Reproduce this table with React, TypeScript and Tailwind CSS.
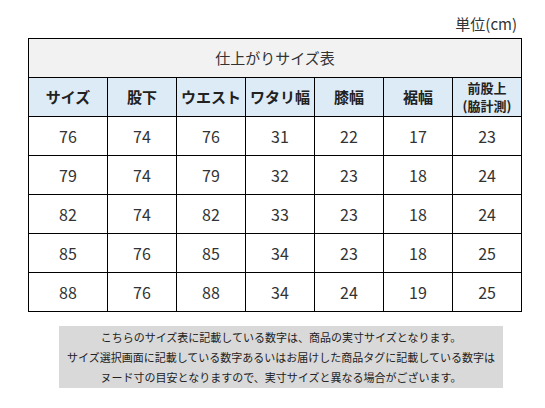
const headers = ['サイズ', '股下', 'ウエスト', 'ワタリ幅', '膝幅', '裾幅'];

const rows = [
  [76, 74, 76, 31, 22, 17, 23],
  [79, 74, 79, 32, 23, 18, 24],
  [82, 74, 82, 33, 23, 18, 24],
  [85, 76, 85, 34, 23, 18, 25],
  [88, 76, 88, 34, 24, 19, 25],
];

export default function App() {
  return (
    <div className="w-[545px] h-[408px] bg-white font-['Noto_Sans_CJK_JP','Noto_Sans',sans-serif] text-[#333]">
      <div className="flex justify-end pr-[28px] pt-[13px] text-[15px] leading-[22px]">単位(cm)</div>

      <table className="ml-[28px] mt-[3px] w-[493px] table-fixed border-collapse border border-black text-center">
        <colgroup>
          <col className="w-[79px]" />
          <col className="w-[69px]" />
          <col className="w-[69px]" />
          <col className="w-[69px]" />
          <col className="w-[69px]" />
          <col className="w-[69px]" />
          <col className="w-[69px]" />
        </colgroup>
        <thead>
          <tr className="h-[39px] bg-[#f2f2f2]">
            <th colSpan={7} className="border border-black text-[15px] font-normal text-[#333]">
              仕上がりサイズ表
            </th>
          </tr>
          <tr className="h-[39px] bg-[#ddebf7]">
            {headers.map((h) => (
              <th key={h} className="border border-black p-0 text-[15px] font-bold text-[#222]">
                {h}
              </th>
            ))}
            <th className="border border-black p-0 text-[13px] font-bold leading-[18px] text-[#222]">
              <div>前股上</div>
              <div>(脇計測)</div>
            </th>
          </tr>
        </thead>
        <tbody>
          {rows.map((r, i) => (
            <tr key={i} className="h-[39px]">
              {r.map((v, j) => (
                <td key={j} className="border border-black p-0 text-[16px]">
                  {v}
                </td>
              ))}
            </tr>
          ))}
        </tbody>
      </table>

      <div className="ml-[59px] mt-[14px] flex h-[62px] w-[444px] flex-col items-center justify-center bg-[#d9d9d9] text-[11px] leading-[20px] text-[#222]">
        <p>こちらのサイズ表に記載している数字は、商品の実寸サイズとなります。</p>
        <p>サイズ選択画面に記載している数字あるいはお届けした商品タグに記載している数字は</p>
        <p>ヌード寸の目安となりますので、実寸サイズと異なる場合がございます。</p>
      </div>
    </div>
  );
}
